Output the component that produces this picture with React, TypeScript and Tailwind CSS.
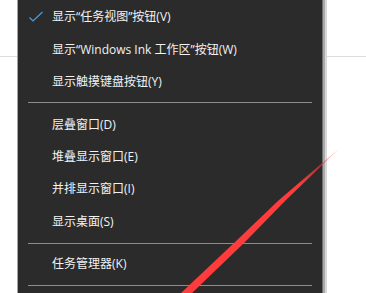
import React from "react";

const font = { fontFamily: '"Open Sans", "Noto Sans CJK SC", sans-serif' };

function Item({ label, h, checked }: { label: string; h: string; checked?: boolean }) {
  return (
    <div className={`${h} flex items-center`}>
      <div className="w-[34px] flex justify-center pl-[2px]">
        {checked && (
          <svg width="16" height="12" viewBox="0 0 16 12" fill="none">
            <path d="M1.5 6.5 L5 10 L14.5 1" stroke="#4a9fe3" strokeWidth="1.2" />
          </svg>
        )}
      </div>
      <span className="text-[12px] text-[#f2f2f2] whitespace-nowrap">{label}</span>
    </div>
  );
}

function Sep({ pt, pb }: { pt: string; pb: string }) {
  return (
    <div className={`${pt} ${pb} pl-[10px] pr-[10px]`}>
      <div className="h-px bg-[#8c8c8c]" />
    </div>
  );
}

export default function App() {
  return (
    <div className="relative w-[366px] h-[293px] overflow-hidden bg-white flex" style={font}>
      <div className="w-[17px] flex flex-col">
        <div className="mt-[56px] h-px bg-[#dcdcdc]" />
      </div>
      <div className="w-px bg-[#a3a3a3]" />
      <div className="w-[304px] bg-[#2b2b2b] flex flex-col">
        <Item h="h-[33px]" checked label="显示“任务视图”按钮(V)" />
        <Item h="h-[33px]" label="显示“Windows Ink 工作区”按钮(W)" />
        <Item h="h-[32px]" label="显示触摸键盘按钮(Y)" />
        <Sep pt="pt-[4px]" pb="pb-[6px]" />
        <Item h="h-[32px]" label="层叠窗口(D)" />
        <Item h="h-[32px]" label="堆叠显示窗口(E)" />
        <Item h="h-[32px]" label="并排显示窗口(I)" />
        <Item h="h-[33px]" label="显示桌面(S)" />
        <Sep pt="pt-[5px]" pb="pb-[4px]" />
        <Item h="h-[32px]" label="任务管理器(K)" />
        <Sep pt="pt-[5px]" pb="pb-[4px]" />
      </div>
      <div className="w-px bg-[#6e6e6e]" />
      <div className="w-[2px] bg-[#a9a9a9]" />
      <div className="w-[2px] bg-[#d8d8d8]" />
      <div className="flex-1 flex flex-col">
        <div className="mt-[56px] h-px bg-[#dcdcdc]" />
      </div>
      <svg className="absolute inset-0 pointer-events-none" width="366" height="293" viewBox="0 0 366 293">
        <defs>
          <linearGradient id="fade" x1="341" y1="147" x2="300" y2="185" gradientUnits="userSpaceOnUse">
            <stop offset="0" stopColor="#ff3b3b" stopOpacity="0.15" />
            <stop offset="1" stopColor="#ff3b3b" stopOpacity="1" />
          </linearGradient>
        </defs>
        <polygon
          points="341,147 286,200 244,243 192,293 181,293 234,243 279,200"
          fill="url(#fade)"
        />
      </svg>
    </div>
  );
}
